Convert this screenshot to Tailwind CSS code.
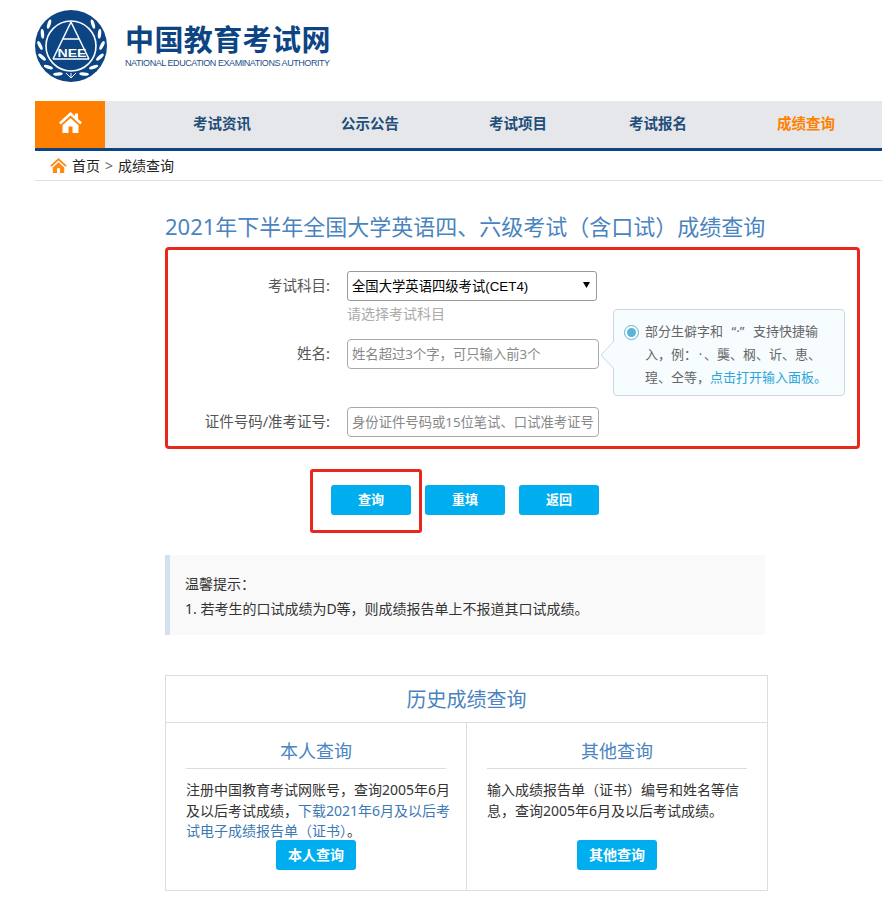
<!DOCTYPE html>
<html lang="zh-CN">
<head>
    <meta charset="UTF-8">
    <meta name="viewport" content="width=device-width, initial-scale=1.0">
    <title>中国教育考试网 - 成绩查询</title>
    <script src="https://cdn.jsdelivr.net/npm/@tailwindcss/browser@4"></script>
</head>
<body class="bg-white h-[902px] overflow-hidden font-['Noto_Sans','Noto_Sans_CJK_SC',sans-serif] text-[#333]">
    <!-- logo -->
    <header class="h-[101px] pl-[35px] pt-[10px] flex items-start">
        <svg width="72" height="72" viewBox="0 0 72 72" class="shrink-0">
            <defs>
                <ellipse id="leafA" cx="36" cy="5" rx="4.8" ry="1.7" fill="#fff" transform="rotate(-28 36 5)"></ellipse>
                <ellipse id="leafB" cx="36" cy="5" rx="4.8" ry="1.7" fill="#fff" transform="rotate(28 36 5)"></ellipse>
            </defs>
            <circle cx="36" cy="36" r="36" fill="#0d4584"></circle>
            <use href="#leafA" transform="rotate(-155 36 36)"></use>
            <use href="#leafA" transform="rotate(-133 36 36)"></use>
            <use href="#leafA" transform="rotate(-111 36 36)"></use>
            <use href="#leafA" transform="rotate(-89 36 36)"></use>
            <use href="#leafA" transform="rotate(-67 36 36)"></use>
            <use href="#leafA" transform="rotate(-45 36 36)"></use>
            <use href="#leafB" transform="rotate(45 36 36)"></use>
            <use href="#leafB" transform="rotate(67 36 36)"></use>
            <use href="#leafB" transform="rotate(89 36 36)"></use>
            <use href="#leafB" transform="rotate(111 36 36)"></use>
            <use href="#leafB" transform="rotate(133 36 36)"></use>
            <use href="#leafB" transform="rotate(155 36 36)"></use>
            <circle cx="36" cy="36" r="25" fill="none" stroke="#fff" stroke-width="1.6"></circle>
            <path d="M36 12 L18 49 M36 12 L54 49 M28 29 H44 M18 49 H54" fill="none" stroke="#fff" stroke-width="1.5"></path>
            <text x="37" y="47" text-anchor="middle" fill="#fff" font-family="Liberation Sans" font-size="11" font-weight="bold" textLength="29" lengthAdjust="spacingAndGlyphs">NEE</text>
            <path d="M31 63 L36 68 L41 63 M36 63 V68" fill="none" stroke="#fff" stroke-width="1"></path>
        </svg>
        <div class="ml-[18px] pt-[12px] w-[210px]">
            <div class="text-[29px] leading-[36px] font-bold tracking-[0.4px] text-[#0d4584] whitespace-nowrap">中国教育考试网</div>
            <div class="text-[9px] leading-[10px] tracking-[-0.44px] text-[#1d4f8a] whitespace-nowrap font-['Liberation_Sans',sans-serif]">NATIONAL EDUCATION EXAMINATIONS AUTHORITY</div>
        </div>
    </header>

    <!-- nav -->
    <nav class="ml-[35px] h-[50px] flex bg-[#e6e7eb] border-b-[3px] border-[#0d4584]">
        <a class="w-[70px] h-[47px] bg-[#ff8000] flex items-center justify-center shrink-0">
            <svg width="23" height="21" viewBox="0 0 23 21" class="-mt-[5px]">
                <path d="M11.5 0 L0 10.5 L1.8 12.4 L11.5 3.6 L21.2 12.4 L23 10.5 L19 6.9 V1.5 H16 V4.1 Z" fill="#fff"></path>
                <path d="M11.5 6 L3.5 13.2 V21 H9.5 V14.5 H13.5 V21 H19.5 V13.2 Z" fill="#fff"></path>
            </svg>
        </a>
        <div class="flex items-center gap-[90px] pl-[88px] pb-[1px] text-[14.5px] font-bold text-[#1f4e79] whitespace-nowrap">
            <a>考试资讯</a>
            <a>公示公告</a>
            <a>考试项目</a>
            <a class="-ml-[8px]">考试报名</a>
            <a class="text-[#ff8000]">成绩查询</a>
        </div>
    </nav>

    <!-- breadcrumb -->
    <div class="ml-[35px] h-[30px] pl-[15px] pb-[1px] flex items-center border-b border-[#e0e0e0] text-[14px] text-[#222]">
        <svg width="17" height="15" viewBox="0 0 23 21" class="mr-[5px]">
            <path d="M11.5 0 L0 10.5 L1.8 12.4 L11.5 3.6 L21.2 12.4 L23 10.5 Z" fill="#ff8a14"></path>
            <path d="M11.5 6 L3.5 13.2 V21 H9.5 V14.5 H13.5 V21 H19.5 V13.2 Z" fill="#ff8a14"></path>
        </svg>
        <span>首页</span>
        <span class="mx-[5px] text-[#666]">&gt;</span>
        <span>成绩查询</span>
    </div>

    <main class="pl-[165px]">
        <h1 class="text-[22px] leading-[32px] mt-[29px] text-[#4a84c0] whitespace-nowrap">2021年下半年全国大学英语四、六级考试（含口试）成绩查询</h1>

        <!-- form -->
        <div class="relative mt-[5px] w-[695px] h-[202px] border-[3px] border-[#e8281e] rounded-[4px] pt-[21px] text-[14.5px] text-[#555]">
            <div class="flex items-center h-[30px]">
                <label class="w-[162px] text-right">考试科目:</label>
                <div class="relative ml-[17px] w-[250px]">
                    <select class="appearance-none w-full h-[30px] pl-[4px] pt-[2px] border border-[#999] rounded-[3px] bg-white text-[13.33px] text-black font-['Liberation_Sans','Noto_Sans_CJK_SC',sans-serif]">
                        <option>全国大学英语四级考试(CET4)</option>
                    </select>
                    <svg width="7" height="6" viewBox="0 0 7 6" class="absolute right-[7px] top-[11px]">
                        <path d="M0 0 H7 L3.5 6 Z" fill="#000"></path>
                    </svg>
                </div>
            </div>
            <p class="pl-[179px] mt-[4px] h-[18px] leading-[18px] text-[14px] text-[#aaa]">请选择考试科目</p>
            <div class="flex items-center h-[30px] mt-[16px]">
                <label class="w-[162px] text-right">姓名:</label>
                <input type="text" placeholder="姓名超过3个字，可只输入前3个" class="ml-[17px] w-[252px] h-[30px] px-[4px] border border-[#aaa] rounded-[4px] text-[13.33px] placeholder:text-[#888]">
            </div>
            <div class="flex items-center h-[30px] mt-[38px]">
                <label class="w-[162px] text-right">证件号码/准考证号:</label>
                <input type="text" placeholder="身份证件号码或15位笔试、口试准考证号" class="ml-[17px] w-[252px] h-[30px] px-[4px] border border-[#aaa] rounded-[4px] text-[13.33px] placeholder:text-[#888]">
            </div>

            <!-- tip bubble -->
            <div class="absolute left-[445px] top-[59px] w-[232px] h-[87px] bg-[#f7fcff] border border-[#c9d8e6] rounded-[4px] pl-[31px] pt-[10px] text-[13px] leading-[23px] text-[#666] whitespace-nowrap">
                <svg width="14" height="30" viewBox="0 0 14 30" class="absolute -left-[14px] top-[30px]">
                    <path d="M14 1 L1 15 L14 29" fill="#f7fcff" stroke="#c9d8e6"></path>
                </svg>
                <span class="absolute left-[10px] top-[15px] w-[15px] h-[15px] rounded-full border border-[#5bb3d6] bg-white flex items-center justify-center">
                    <span class="block w-[9px] h-[9px] rounded-full bg-[#5bb3d6]"></span>
                </span>
                部分生僻字和<span class="inline-block w-[30px] text-center">“·”</span>支持快捷输<br>入，例：<span class="inline-block w-[7px] text-center">·</span>、龑、㭎、䜣、恵、<br>瑝、仝等，<a class="text-[#2ba6d6]">点击打开输入面板。</a>
            </div>
        </div>

        <!-- buttons -->
        <div class="relative flex gap-[14px] mt-[36px] ml-[166px] text-[13px] font-bold text-white">
            <button class="w-[80px] h-[30px] bg-[#00aeef] rounded-[3px]">查询</button>
            <button class="w-[80px] h-[30px] bg-[#00aeef] rounded-[3px]">重填</button>
            <button class="w-[80px] h-[30px] bg-[#00aeef] rounded-[3px]">返回</button>
            <span class="absolute -left-[21px] -top-[16px] w-[112px] h-[64px] border-[3px] border-[#e8281e] rounded-[3px]"></span>
        </div>

        <!-- note -->
        <div class="mt-[40px] w-[600px] h-[80px] bg-[#f9f9f9] border-l-[5px] border-[#d3e0ee] pl-[15px] pt-[16px] text-[14px] leading-[25px]">
            <p>温馨提示：</p>
            <p>1. 若考生的口试成绩为D等，则成绩报告单上不报道其口试成绩。</p>
        </div>

        <!-- history -->
        <div class="mt-[40px] w-[603px] h-[216px] border border-[#ddd]">
            <h2 class="h-[47px] leading-[47px] text-center text-[20px] text-[#4a84c0] border-b border-[#ddd]">历史成绩查询</h2>
            <div class="flex h-[167px]">
                <section class="w-[301px] border-r border-[#ddd] px-[20px] text-[14px] leading-[20.5px]">
                    <h3 class="h-[46px] leading-[56px] text-center text-[18px] text-[#4a84c0] border-b border-[#ddd] -mb-px">本人查询</h3>
                    <p class="mt-[12px] h-[61px] whitespace-nowrap">注册中国教育考试网账号，查询2005年6月<br>及以后考试成绩，<a class="text-[#3c78b4]">下载2021年6月及以后考<br>试电子成绩报告单（证书）</a>。</p>
                    <button class="block mx-auto -mt-[1px] w-[80px] h-[30px] bg-[#00aeef] rounded-[3px] text-[14px] font-bold text-white">本人查询</button>
                </section>
                <section class="flex-1 px-[20px] text-[14px] leading-[20.5px]">
                    <h3 class="h-[46px] leading-[56px] text-center text-[18px] text-[#4a84c0] border-b border-[#ddd] -mb-px">其他查询</h3>
                    <p class="mt-[12px] h-[61px] whitespace-nowrap">输入成绩报告单（证书）编号和姓名等信<br>息，查询2005年6月及以后考试成绩。</p>
                    <button class="block mx-auto -mt-[1px] w-[80px] h-[30px] bg-[#00aeef] rounded-[3px] text-[14px] font-bold text-white">其他查询</button>
                </section>
            </div>
        </div>
    </main>
</body>
</html>
